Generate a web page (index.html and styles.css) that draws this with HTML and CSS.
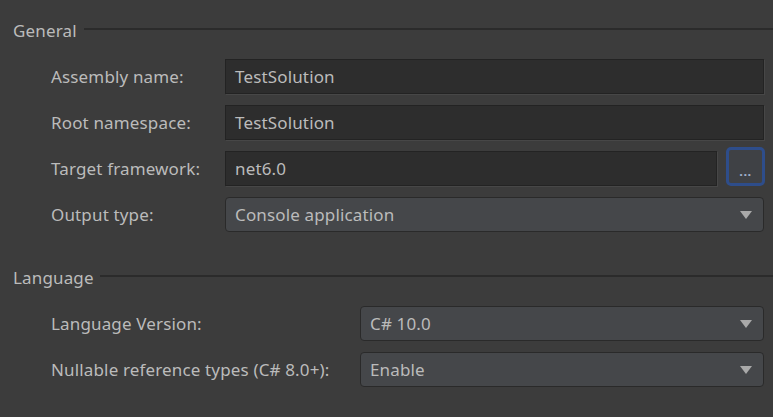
FILE: index.html
```html
<!DOCTYPE html>
<html>
<head>
<meta charset="utf-8">
<link rel="stylesheet" href="styles.css">
</head>
<body>
<div class="page">
  <section class="group">
    <div class="group-head"><span class="group-title">General</span><span class="group-line"></span></div>
    <div class="rows rows-general">
      <label class="lbl">Assembly name:</label>
      <div class="field">TestSolution</div>
      <label class="lbl">Root namespace:</label>
      <div class="field">TestSolution</div>
      <label class="lbl">Target framework:</label>
      <div class="field-with-btn">
        <div class="field">net6.0</div>
        <button class="browse">...</button>
      </div>
      <label class="lbl">Output type:</label>
      <div class="combo">Console application<span class="arrow"></span></div>
    </div>
  </section>
  <section class="group group-lang">
    <div class="group-head"><span class="group-title">Language</span><span class="group-line"></span></div>
    <div class="rows rows-lang">
      <label class="lbl">Language Version:</label>
      <div class="combo">C# 10.0<span class="arrow"></span></div>
      <label class="lbl">Nullable reference types (C# 8.0+):</label>
      <div class="combo">Enable<span class="arrow"></span></div>
    </div>
  </section>
</div>
</body>
</html>
```
FILE: styles.css
```css
html, body {
  margin: 0;
  padding: 0;
  background: #3c3c3c;
}
body {
  font-family: "Noto Sans", "Open Sans", sans-serif;
  font-size: 17px;
  letter-spacing: 0.15px;
  color: #bbbbbb;
  width: 773px;
  height: 417px;
  overflow: hidden;
}
.page {
  padding-top: 19px;
}
.group-head {
  display: flex;
  align-items: center;
  height: 24px;
  margin-left: 13px;
  margin-right: -20px;
}
.group-title {
  line-height: 24px;
  padding-right: 7px;
}
.group-line {
  flex: 1;
  height: 2px;
  background: #2b2b2b;
  margin-top: -5px;
}
.group-lang .group-title {
  padding-right: 6px;
}
.rows {
  display: grid;
  align-items: center;
  padding-left: 51px;
  padding-right: 9px;
  row-gap: 11px;
  margin-top: 16px;
}
.rows-general {
  grid-template-columns: 174px 1fr;
}
.group-lang {
  margin-top: 34px;
}
.rows-lang {
  grid-template-columns: 309px 1fr;
}
.lbl {
  white-space: nowrap;
}
.field {
  height: 35px;
  box-sizing: border-box;
  background: #2d2d2d;
  border: 1px solid #232323;
  box-shadow: 1px 1px 0 #474747;
  padding-left: 9px;
  display: flex;
  align-items: center;
  color: #bbbbbb;
}
.field-with-btn {
  display: flex;
  align-items: center;
  gap: 9px;
  height: 35px;
}
.field-with-btn .field {
  flex: 1;
}
.browse {
  width: 39px;
  height: 39px;
  margin: -4px -1px 0 0;
  box-sizing: border-box;
  border: 3px solid #2e4d8a;
  border-radius: 5px;
  background: #3f4145;
  color: #9fb0cc;
  font-family: inherit;
  font-size: 13px;
  font-weight: bold;
  padding: 8px 0 0 0;
  letter-spacing: 0.5px;
}
.combo {
  position: relative;
  height: 35px;
  box-sizing: border-box;
  background: #45474a;
  border: 1px solid #2a2a2a;
  border-radius: 4px;
  padding-left: 9px;
  display: flex;
  align-items: center;
  color: #bbbbbb;
}
.arrow {
  position: absolute;
  right: 11px;
  top: 13px;
  width: 0;
  height: 0;
  border-left: 6px solid transparent;
  border-right: 6px solid transparent;
  border-top: 8px solid #a9a9a9;
}
```
